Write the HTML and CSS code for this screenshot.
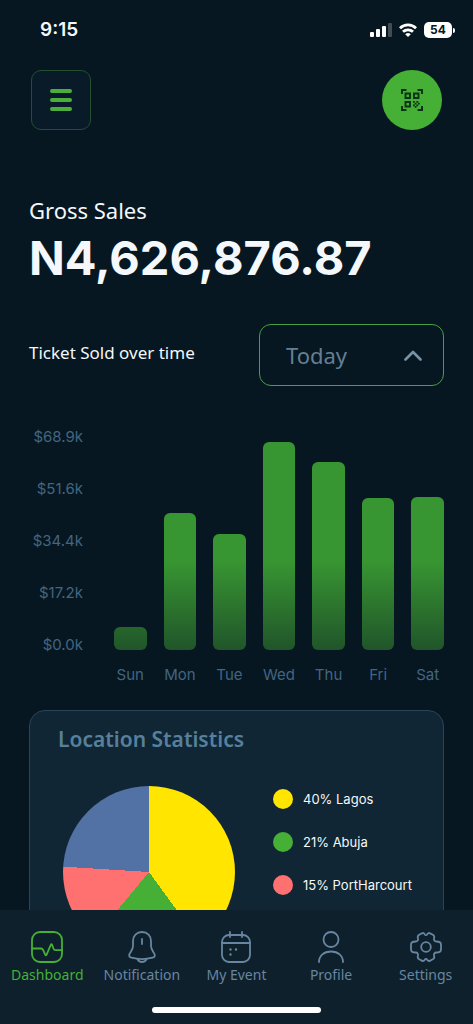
FILE: index.html
```html
<!DOCTYPE html>
<html lang="en">
<head>
<meta charset="utf-8">
<meta name="viewport" content="width=device-width, initial-scale=1">
<title>Dashboard</title>
<link rel="stylesheet" href="styles.css">
</head>
<body>
<div class="app">
  <div class="status">
    <time class="clock">9:15</time>
    <div class="indicators">
      <svg width="22" height="14" viewBox="0 0 22 14" fill="#fff" aria-hidden="true">
        <rect x="0" y="9" width="4" height="5" rx="1"/>
        <rect x="6" y="6" width="4" height="8" rx="1"/>
        <rect x="12" y="3" width="4" height="11" rx="1"/>
        <rect x="18" y="0" width="4" height="14" rx="1" fill="#414c55"/>
      </svg>
      <svg width="18" height="14" viewBox="0 0 18 14" fill="none" stroke="#fff" stroke-width="2.8" aria-hidden="true">
        <path d="M1 5.200a11.500 11.500 0 0 1 16 0"/>
        <path d="M4 8.800a7.200 7.200 0 0 1 10 0"/>
        <path d="M9 14 6.200 11.300a4.100 4.100 0 0 1 5.600 0z" fill="#fff" stroke="none"/>
      </svg>
      <div class="battery"><span class="battery-level">54</span><span class="battery-tip"></span></div>
    </div>
  </div>

  <main class="content">
    <header class="topbar">
      <button class="menu" type="button" aria-label="Menu">
        <svg width="22" height="22" viewBox="0 0 22 22" stroke="#4cae3c" stroke-width="4" stroke-linecap="round" aria-hidden="true">
          <path d="M2 2h18M2 11h18M2 20h18"/>
        </svg>
      </button>
      <button class="scan" type="button" aria-label="Scan QR code">
        <svg width="22" height="22" viewBox="0 0 22 22" fill="none" stroke="#0b3417" stroke-width="2" aria-hidden="true">
          <path d="M1 5V1h4.500M16.500 1H21v4M1 17v4h4.500M16.500 21H21v-4"/>
          <path d="M4.500 4.500h4.500v4.500H4.500zM13 4.500h4.500v4.500H13zM4.500 13h4.500v4.500H4.500z" stroke-width="1.900"/>
          <path d="M12 12h1.800v1.800H12zM15.400 12h1.800v1.800h-1.800zM13.700 13.700h1.800v1.800h-1.800zM17 13.700h1.800v1.800H17zM12 15.400h1.800v1.800H12zM15.400 15.400h1.800v1.800h-1.800zM13.700 17h1.800v1.800h-1.800z" fill="#0b3417" stroke="none"/>
        </svg>
      </button>
    </header>

    <section class="sales">
      <h1 class="sales-label">Gross Sales</h1>
      <p class="sales-total">N4,626,876.87</p>
    </section>

    <section class="tickets">
      <div class="filter">
        <label class="filter-label" for="range">Ticket Sold over time</label>
        <div class="picker">
          <select id="range" class="range"><option>Today</option></select>
          <svg class="chevron" width="18" height="11" viewBox="0 0 18 11" fill="none" stroke="#7892a6" stroke-width="2.600" stroke-linecap="round" stroke-linejoin="round" aria-hidden="true"><path d="M1.500 9.500 9 2l7.500 7.500"/></svg>
        </div>
      </div>
      <div class="chart">
        <div class="axis">
          <span>$68.9k</span><span>$51.6k</span><span>$34.4k</span><span>$17.2k</span><span>$0.0k</span>
        </div>
        <div class="bars">
          <div class="bar" style="height:11%"></div>
          <div class="bar" style="height:66%"></div>
          <div class="bar" style="height:56%"></div>
          <div class="bar" style="height:100%"></div>
          <div class="bar" style="height:90.500%"></div>
          <div class="bar" style="height:73%"></div>
          <div class="bar" style="height:73.500%"></div>
        </div>
        <div class="days">
          <span>Sun</span><span>Mon</span><span>Tue</span><span>Wed</span><span>Thu</span><span>Fri</span><span>Sat</span>
        </div>
      </div>
    </section>

    <section class="card">
      <h2 class="card-title">Location Statistics</h2>
      <div class="breakdown">
        <div class="pie" role="img" aria-label="Sales by location"></div>
        <ul class="legend">
          <li class="legend-item"><span class="dot lagos"></span>40% Lagos</li>
          <li class="legend-item"><span class="dot abuja"></span>21% Abuja</li>
          <li class="legend-item"><span class="dot portharcourt"></span>15% PortHarcourt</li>
        </ul>
      </div>
    </section>
  </main>

  <footer class="dock">
    <nav class="tabs">
      <a class="tab active" href="#dashboard" aria-current="page">
        <svg class="tab-icon" viewBox="0 0 32 32" aria-hidden="true"><rect x="1" y="1" width="30" height="30" rx="8"/><path d="M1 17.500h9c1.200 0 1.700.5 2.200 1.600l2 4.500c.5 1 1 1 1.400 0l4.200-9.800c.4-.9.900-.9 1.300 0l1.300 3.700c.4 1.100 1 1.700 2.200 1.700H31"/></svg>
        Dashboard
      </a>
      <a class="tab" href="#notification">
        <svg class="tab-icon" viewBox="0 0 32 32" aria-hidden="true"><path d="M16 1C10.500 1 7 5 7 10v5c0 3.500-2.300 5.400-3.500 8-.9 2 .1 3.200 2 3.700 6.500 1.800 14.500 1.800 21 0 1.900-.5 2.900-1.700 2-3.700-1.200-2.600-3.500-4.500-3.500-8v-5c0-5-3.500-9-9-9z"/><path d="M16 8v5M11.500 28.200c1 1.800 2.600 2.800 4.500 2.800s3.500-1 4.500-2.800"/></svg>
        Notification
      </a>
      <a class="tab" href="#events">
        <svg class="tab-icon" viewBox="0 0 32 32" aria-hidden="true"><rect x="2" y="4" width="28" height="27" rx="7"/><path d="M2 12h28M10 1v5M22 1v5"/><path d="M10.500 18.500h.01M16 18.500h.01M10.500 23.500h.01" stroke-width="2.400"/></svg>
        My Event
      </a>
      <a class="tab" href="#profile">
        <svg class="tab-icon" viewBox="0 0 32 32" aria-hidden="true"><circle cx="16" cy="8.500" r="7.500"/><path d="M4 31c0-6.500 5-10.500 12-10.500S28 24.500 28 31"/></svg>
        Profile
      </a>
      <a class="tab" href="#settings">
        <svg class="tab-icon" viewBox="0 0 32 32" aria-hidden="true"><circle cx="16" cy="16" r="4.800"/><path d="M11.800 2.400c1.800-1 2.600.1 3 1 .5 1 1.900 1 2.400 0 .4-.9 1.200-2 3-1l2.600 1.300c2 1.100 1.700 2.300 1.300 3.500-.6 1.700.4 3.300 2.300 3.300 2.900 0 4.600.7 4.600 3v5c0 2.300-1.700 3-4.600 3-1.900 0-2.900 1.600-2.300 3.300.4 1.200.7 2.400-1.300 3.500l-2.600 1.300c-1.800 1-2.600-.1-3-1-.5-1-1.900-1-2.400 0-.4.900-1.200 2-3 1l-2.600-1.300c-2-1.100-1.700-2.300-1.300-3.500.6-1.700-.4-3.300-2.300-3.300-2.900 0-4.600-.7-4.600-3v-5c0-2.300 1.700-3 4.600-3 1.900 0 2.900-1.600 2.300-3.300-.4-1.200-.7-2.400 1.300-3.500z"/></svg>
        Settings
      </a>
    </nav>
    <div class="home-indicator"></div>
  </footer>
</div>
</body>
</html>
```

FILE: styles.css
```css
* { box-sizing: border-box; }

body {
  margin: 0;
  background: #061721;
  color: #f4f8fb;
  font-family: "Noto Sans", "Open Sans", sans-serif;
}

h1, h2, p, ul { margin: 0; padding: 0; }

.app {
  display: flex;
  flex-direction: column;
  height: 100vh;
}

.status {
  display: flex;
  align-items: center;
  justify-content: space-between;
  padding: 18px 18px 0 40px;
  font-family: Inter, sans-serif;
}

.clock { font-size: 19px; font-weight: 600; line-height: 24px; }

.indicators { display: flex; align-items: center; gap: 7px; }

.battery { display: flex; align-items: center; gap: 1px; }

.battery-level {
  width: 28px;
  border-radius: 5px;
  background: #fff;
  color: #061721;
  font-size: 12px;
  font-weight: 700;
  line-height: 16px;
  text-align: center;
}

.battery-tip {
  width: 2px;
  height: 5px;
  border-radius: 0 2px 2px 0;
  background: #fff;
}

.content {
  flex: 1;
  min-height: 0;
  overflow-y: auto;
  scrollbar-width: none;
  padding: 28px 29px 0;
}

.topbar {
  display: flex;
  justify-content: space-between;
  padding: 0 2px;
}

.menu, .scan {
  display: grid;
  place-items: center;
  width: 60px;
  height: 60px;
  padding: 0;
}

.menu {
  border: 1px solid #24502f;
  border-radius: 10px;
  background: #091b29;
}

.scan {
  border: 0;
  border-radius: 50%;
  background: #45b035;
}

.sales { padding-top: 66px; }

.sales-label { font-size: 22px; font-weight: 400; line-height: 28px; }

.sales-total {
  font-family: Inter, sans-serif;
  font-size: 47px;
  font-weight: 700;
  line-height: 68px;
}

.filter {
  display: flex;
  align-items: center;
  justify-content: space-between;
  padding-top: 32px;
}

.filter-label { padding-bottom: 4px; font-size: 17px; line-height: 24px; }

.picker { display: grid; align-items: center; width: 185px; }

.range, .chevron { grid-area: 1 / 1; }

.range {
  appearance: none;
  width: 100%;
  height: 62px;
  padding: 0 26px;
  border: 1px solid #4a9f40;
  border-radius: 12px;
  background: transparent;
  color: #647f94;
  font-family: inherit;
  font-size: 22px;
}

.chevron { justify-self: end; margin-right: 22px; pointer-events: none; }

.chart {
  display: grid;
  grid-template-columns: 54px 1fr;
  grid-template-rows: 218px auto;
  column-gap: 31px;
  padding-top: 41px;
  color: #426580;
  font-family: Inter, sans-serif;
  font-size: 15px;
  line-height: 20px;
}

.axis {
  display: flex;
  flex-direction: column;
  justify-content: space-between;
  text-align: right;
  height: 228px;
}

.bars, .days {
  display: grid;
  grid-template-columns: repeat(7, minmax(0, 1fr));
  column-gap: 17px;
}

.bars { align-items: end; height: 208px; margin-top: 15px; }

.bar {
  border-radius: 6px;
  background: linear-gradient(to top, #20552a, #389632 90px);
}

.days { grid-column: 2; padding-top: 20px; }

.days span { display: flex; justify-content: center; }

.card {
  margin-top: 25px;
  padding: 12px 28px 40px;
  border: 1px solid #29455a;
  border-radius: 16px;
  background: #102634;
}

.card-title {
  color: #56809b;
  font-size: 21px;
  font-weight: 600;
  line-height: 32px;
}

.breakdown {
  display: flex;
  gap: 38px;
  padding: 31px 0 0 5px;
}

.pie {
  flex: none;
  width: 172px;
  height: 172px;
  border-radius: 50%;
  background: conic-gradient(#ffe500 0 40%, #45b035 0 61%, #ff7070 0 76%, #5272a6 0);
}

.legend {
  display: flex;
  flex-direction: column;
  gap: 23px;
  padding-top: 3px;
  list-style: none;
  font-family: Inter, sans-serif;
  font-size: 13px;
  line-height: 20px;
}

.legend-item { display: flex; align-items: center; gap: 10px; white-space: nowrap; }

.dot { width: 20px; height: 20px; border-radius: 50%; }
.lagos { background: #ffe500; }
.abuja { background: #45b035; }
.portharcourt { background: #ff7070; }

.dock { padding: 21px 0 11px; background: #0e202c; }

.tabs { display: grid; grid-template-columns: repeat(5, minmax(0, 1fr)); }

.tab {
  display: flex;
  flex-direction: column;
  align-items: center;
  gap: 2px;
  color: #6886a0;
  font-size: 14px;
  line-height: 20px;
  text-decoration: none;
  white-space: nowrap;
}

.active { color: #45b035; }

.tab-icon {
  width: 32px;
  height: 32px;
  fill: none;
  stroke: currentColor;
  stroke-width: 1.8;
  stroke-linecap: round;
  stroke-linejoin: round;
}

.home-indicator {
  width: 169px;
  height: 6px;
  margin: 22px auto 0;
  border-radius: 3px;
  background: #fff;
}
```
